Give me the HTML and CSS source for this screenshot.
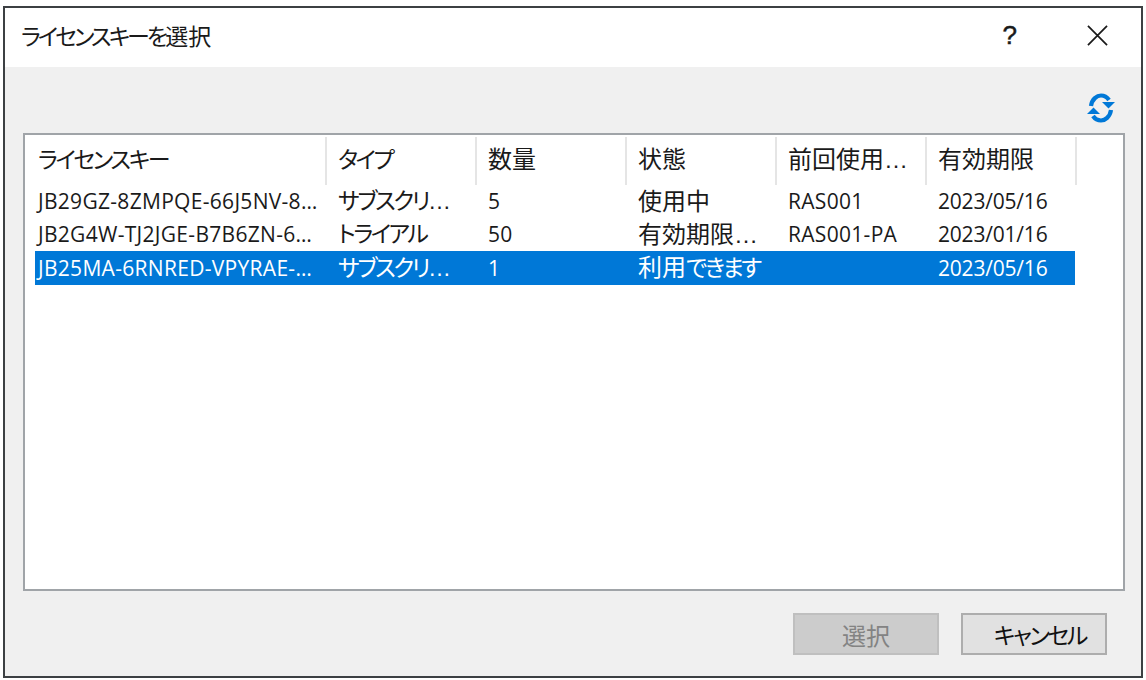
FILE: index.html
```html
<!DOCTYPE html>
<html lang="ja">
<head>
<meta charset="utf-8">
<title>ライセンスキーを選択</title>
<link rel="stylesheet" href="styles.css">
</head>
<body>
<div class="window">
  <header class="titlebar">
    <span class="title"><span class="kana">ライセンスキーを</span>選択</span>
    <span class="help">?</span>
    <svg class="close" width="22" height="22" viewBox="0 0 22 22"><path d="M1 1L21 21M21 1L1 21" fill="none" stroke="#1a1a1a" stroke-width="1.8"/></svg>
  </header>
  <main class="content">
    <div class="toolbar">
      <svg class="refresh" width="28" height="30" viewBox="0 0 28 30">
        <path d="M4 13C5 6 10 2.5 14 2.5C17.5 2.5 20 4 22 7" fill="none" stroke="#0078d7" stroke-width="4.2"/>
        <path d="M28 9L21.5 15.5L15 9Z" fill="#0078d7"/>
        <path d="M24 17C23 24 18 27.5 14 27.5C10.5 27.5 8 26 6 23" fill="none" stroke="#0078d7" stroke-width="4.2"/>
        <path d="M0 21L6.5 14.5L13 21Z" fill="#0078d7"/>
      </svg>
    </div>
    <div class="list">
      <div class="row head">
        <div class="cell kana">ライセンスキー</div>
        <div class="cell kana">タイプ</div>
        <div class="cell">数量</div>
        <div class="cell">状態</div>
        <div class="cell">前回使用…</div>
        <div class="cell">有効期限</div>
      </div>
      <div class="row">
        <div class="cell latin">JB29GZ-8ZMPQE-66J5NV-8…</div>
        <div class="cell kana">サブスクリ…</div>
        <div class="cell latin">5</div>
        <div class="cell">使用中</div>
        <div class="cell latin">RAS001</div>
        <div class="cell latin date">2023/05/16</div>
      </div>
      <div class="row">
        <div class="cell latin">JB2G4W-TJ2JGE-B7B6ZN-6…</div>
        <div class="cell kana">トライアル</div>
        <div class="cell latin">50</div>
        <div class="cell">有効期限…</div>
        <div class="cell latin">RAS001-PA</div>
        <div class="cell latin date">2023/01/16</div>
      </div>
      <div class="row selected">
        <div class="cell latin">JB25MA-6RNRED-VPYRAE-…</div>
        <div class="cell kana">サブスクリ…</div>
        <div class="cell latin">1</div>
        <div class="cell">利用<span class="kana">できます</span></div>
        <div class="cell"></div>
        <div class="cell latin date">2023/05/16</div>
      </div>
    </div>
    <div class="actions">
      <button class="btn" disabled>選択</button>
      <button class="btn cancel"><span class="kana">キャンセル</span></button>
    </div>
  </main>
</div>
</body>
</html>
```
FILE: styles.css
```css
* { box-sizing: border-box; }
html, body { margin: 0; height: 680px; background: #fff; overflow: hidden; }
body {
  padding: 6px 3px 2px 3px;
  font-family: "Liberation Sans", "Noto Sans CJK JP", sans-serif;
  font-size: 24px;
  font-feature-settings: "palt";
  color: #1a1a1a;
}
.kana { font-size: 23px; letter-spacing: -2.4px; }
.window {
  height: 672px;
  border: 2px solid #3c4043;
  background: #fff;
  display: flex;
  flex-direction: column;
}
.titlebar {
  height: 59px;
  flex: none;
  display: flex;
  align-items: center;
  padding: 0 33px 5px 16px;
}
.title { flex: 1; font-size: 23px; }
.title .kana { letter-spacing: -3px; }
.help { font-size: 26px; margin-right: 70px; -webkit-text-stroke: 0.5px #1a1a1a; }
.close { width: 21px; height: 21px; }
.content {
  flex: 1;
  background: #f0f0f0;
  display: flex;
  flex-direction: column;
  padding: 0 16px 0 18px;
}
.toolbar {
  height: 66px;
  flex: none;
  display: flex;
  justify-content: flex-end;
  align-items: flex-end;
  padding: 0 10px 10px 0;
}
.list {
  height: 458px;
  flex: none;
  background: #fff;
  border: 2px solid #a0a4a8;
  padding: 2px 0 0 10px;
}
.row { display: flex; height: 33px; align-items: center; width: 1040px; }
.head { height: 48px; }
.cell {
  width: 150px;
  flex: none;
  padding: 0 0 5px 11px;
  white-space: nowrap;
  overflow: hidden;
}
.cell:first-child { width: 292px; padding-left: 3px; }
.latin {
  font-family: "Open Sans", "Liberation Sans", sans-serif;
  font-size: 21px;
  letter-spacing: 0.3px;
  padding-bottom: 1px;
}
.date { letter-spacing: -0.2px; }
.head .cell { height: 48px; padding-bottom: 0; line-height: 46px; border-right: 2px solid #e5e5e5; }
.selected { height: 34px; background: #0078d7; color: #fff; }
.actions {
  flex: 1;
  display: flex;
  justify-content: flex-end;
  align-items: flex-start;
  gap: 22px;
  padding: 22px 18px 0 0;
}
.btn {
  width: 146px;
  height: 42px;
  background: #e1e1e1;
  border: 2px solid #adadad;
  font: inherit;
  font-feature-settings: "palt";
  color: #111;
  padding: 0;
}
.cancel { padding-left: 12px; }
.btn:disabled { background: #ccc; border-color: #bfbfbf; color: #838383; }
```
